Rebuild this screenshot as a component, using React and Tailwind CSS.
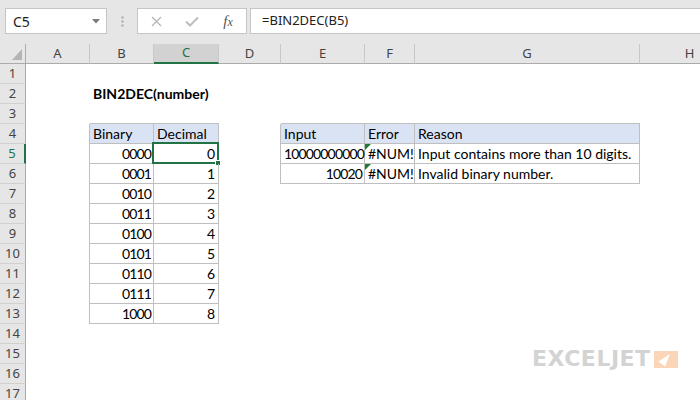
import React from "react";

const colW = ["w-[64px]", "w-[64px]", "w-[65px]", "w-[62px]", "w-[84px]", "w-[50px]", "w-[225px]", "w-[100px]"];
const colNames = ["A", "B", "C", "D", "E", "F", "G", "H"];

const data = {
  "2-1": { t: "BIN2DEC(number)", bold: true },
  "4-1": { t: "Binary", fill: true },
  "4-2": { t: "Decimal", fill: true },
  "4-4": { t: "Input", fill: true },
  "4-5": { t: "Error", fill: true },
  "4-6": { t: "Reason", fill: true },
  "5-4": { t: "10000000000", right: true, num: true },
  "5-5": { t: "#NUM!", err: true },
  "5-6": { t: "Input contains more than 10 digits." },
  "6-4": { t: "10020", right: true, num: true },
  "6-5": { t: "#NUM!", err: true },
  "6-6": { t: "Invalid binary number." },
};
const bins = ["0000", "0001", "0010", "0011", "0100", "0101", "0110", "0111", "1000"];
bins.forEach((b, i) => {
  data[`${5 + i}-1`] = { t: b, right: true, num: true };
  data[`${5 + i}-2`] = { t: String(i), right: true };
});

const inT = (r, c) =>
  (r >= 4 && r <= 13 && (c === 1 || c === 2)) || (r >= 4 && r <= 6 && c >= 4 && c <= 6);

function Cell({ r, c }) {
  const d = data[`${r}-${c}`];
  const br = inT(r, c) || inT(r, c + 1);
  const bb = inT(r, c) || inT(r + 1, c);
  const sel = r === 5 && c === 2;
  return (
    <div
      className={[
        "relative h-[20px] shrink-0 border-[#bfbfbf] whitespace-nowrap leading-[19px] text-[14px] text-black font-['Lato'] px-[3px]",
        colW[c],
        br ? "border-r" : "",
        bb ? "border-b" : "",
        d && d.fill ? "bg-[#dae3f3]" : "",
        d && d.right ? "text-right" : "text-left",
        d && d.bold ? "font-bold" : "",
        d && d.num ? "tracking-[-0.85px] pr-[2px]" : "",
      ].join(" ")}
    >
      {d ? d.t : ""}
      {d && d.err ? (
        <span className="absolute top-0 left-0 w-0 h-0 border-t-[6px] border-t-[#1e7b34] border-r-[6px] border-r-transparent" />
      ) : null}
      {sel ? (
        <span className="absolute -top-[2px] -left-[2px] -right-[1px] -bottom-[1px] border-2 border-[#217346] pointer-events-none">
          <span className="absolute -right-[4px] -bottom-[4px] w-[6px] h-[6px] bg-[#217346] border border-white" />
        </span>
      ) : null}
    </div>
  );
}

function Row({ r }) {
  const selRow = r === 5;
  return (
    <div className="flex h-[20px]">
      <div
        className={[
          "w-[26px] h-[20px] shrink-0 bg-[#e6e6e6] border-b border-b-[#d0d0d0] flex items-center justify-center text-[13px] font-['Noto_Sans']",
          selRow
            ? "bg-[#d2d2d2] border-r-2 border-r-[#217346] text-[#217346]"
            : "border-r border-r-[#ababab] text-[#444]",
        ].join(" ")}
      >
        {r}
      </div>
      {colNames.map((_, c) => (
        <Cell key={c} r={r} c={c} />
      ))}
    </div>
  );
}

export default function App() {
  const rows = Array.from({ length: 17 }, (_, i) => i + 1);
  return (
    <div className="relative w-[700px] h-[400px] overflow-hidden bg-white">
      {/* Formula bar */}
      <div className="h-[44px] bg-[#e6e6e6] flex items-start pt-[8px] pl-[5px] font-['Noto_Sans']">
        <div className="w-[102px] h-[26px] shrink-0 bg-white border border-[#c6c6c6] flex items-center justify-between pl-[7px] pr-[6px]">
          <span className="text-[14px] text-[#222]">C5</span>
          <svg width="8" height="5" viewBox="0 0 8 5">
            <polygon points="0,0 8,0 4,4.5" fill="#7a7a7a" />
          </svg>
        </div>
        <div className="w-[30px] h-[26px] shrink-0 flex items-center justify-center">
          <svg width="3" height="11" viewBox="0 0 3 11">
            <rect x="0.5" y="0.5" width="2" height="2" fill="#a6a6a6" />
            <rect x="0.5" y="4.5" width="2" height="2" fill="#a6a6a6" />
            <rect x="0.5" y="8.5" width="2" height="2" fill="#a6a6a6" />
          </svg>
        </div>
        <div className="w-[110px] h-[26px] shrink-0 bg-white border border-[#c6c6c6] flex items-center">
          <div className="w-[36px] flex items-center justify-center">
            <svg width="11" height="11" viewBox="0 0 11 11">
              <path d="M1 1 L10 10 M10 1 L1 10" stroke="#b4b4b4" strokeWidth="1.3" fill="none" />
            </svg>
          </div>
          <div className="w-[36px] flex items-center justify-center">
            <svg width="14" height="11" viewBox="0 0 14 11">
              <polyline points="1,5.5 5,9.5 13,1.5" stroke="#bdbdbd" strokeWidth="2" fill="none" />
            </svg>
          </div>
          <div className="w-[36px] flex items-center justify-center">
            <span className="font-['Liberation_Serif'] italic text-[15px] text-[#555] leading-none">
              f<span className="text-[12px]">x</span>
            </span>
          </div>
        </div>
        <div className="ml-[3px] -mr-[2px] flex-1 h-[26px] bg-white border border-[#c6c6c6] flex items-center pl-[11px] text-[13px] text-[#222]">
          =BIN2DEC(B5)
        </div>
      </div>

      {/* Column headers */}
      <div className="flex h-[20px] bg-[#e6e6e6] font-['Noto_Sans'] text-[13px]">
        <div className="w-[26px] h-[20px] shrink-0 border-r border-r-[#ababab] border-b border-b-[#ababab] flex items-end justify-end pr-[3px] pb-[3px]">
          <svg width="10" height="11" viewBox="0 0 10 11">
            <polygon points="10,0 10,11 0,11" fill="#b4b4b4" />
          </svg>
        </div>
        {colNames.map((n, c) => (
          <div
            key={n}
            className={[
              "h-[20px] shrink-0 flex items-center justify-center border-r border-r-[#c8c8c8]",
              colW[c],
              c === 2
                ? "bg-[#d2d2d2] border-b-2 border-b-[#217346] text-[#217346]"
                : "border-b border-b-[#ababab] text-[#444]",
            ].join(" ")}
          >
            {n}
          </div>
        ))}
      </div>

      {/* Rows */}
      {rows.map((r) => (
        <Row key={r} r={r} />
      ))}

      {/* Watermark logo */}
      <div className="absolute left-[532px] top-[347px] flex items-center gap-[3px]">
        <span className="font-['DejaVu_Sans',sans-serif] font-bold text-[22px] leading-[24px] tracking-[0.5px] text-[#d3d3d3]">
          EXCELJET
        </span>
        <svg width="24" height="17" viewBox="0 0 24 17">
          <rect width="24" height="17" fill="#fbd5b8" />
          <polygon points="16,3 4.5,10.5 11,15.5" fill="#ffffff" />
        </svg>
      </div>
    </div>
  );
}
